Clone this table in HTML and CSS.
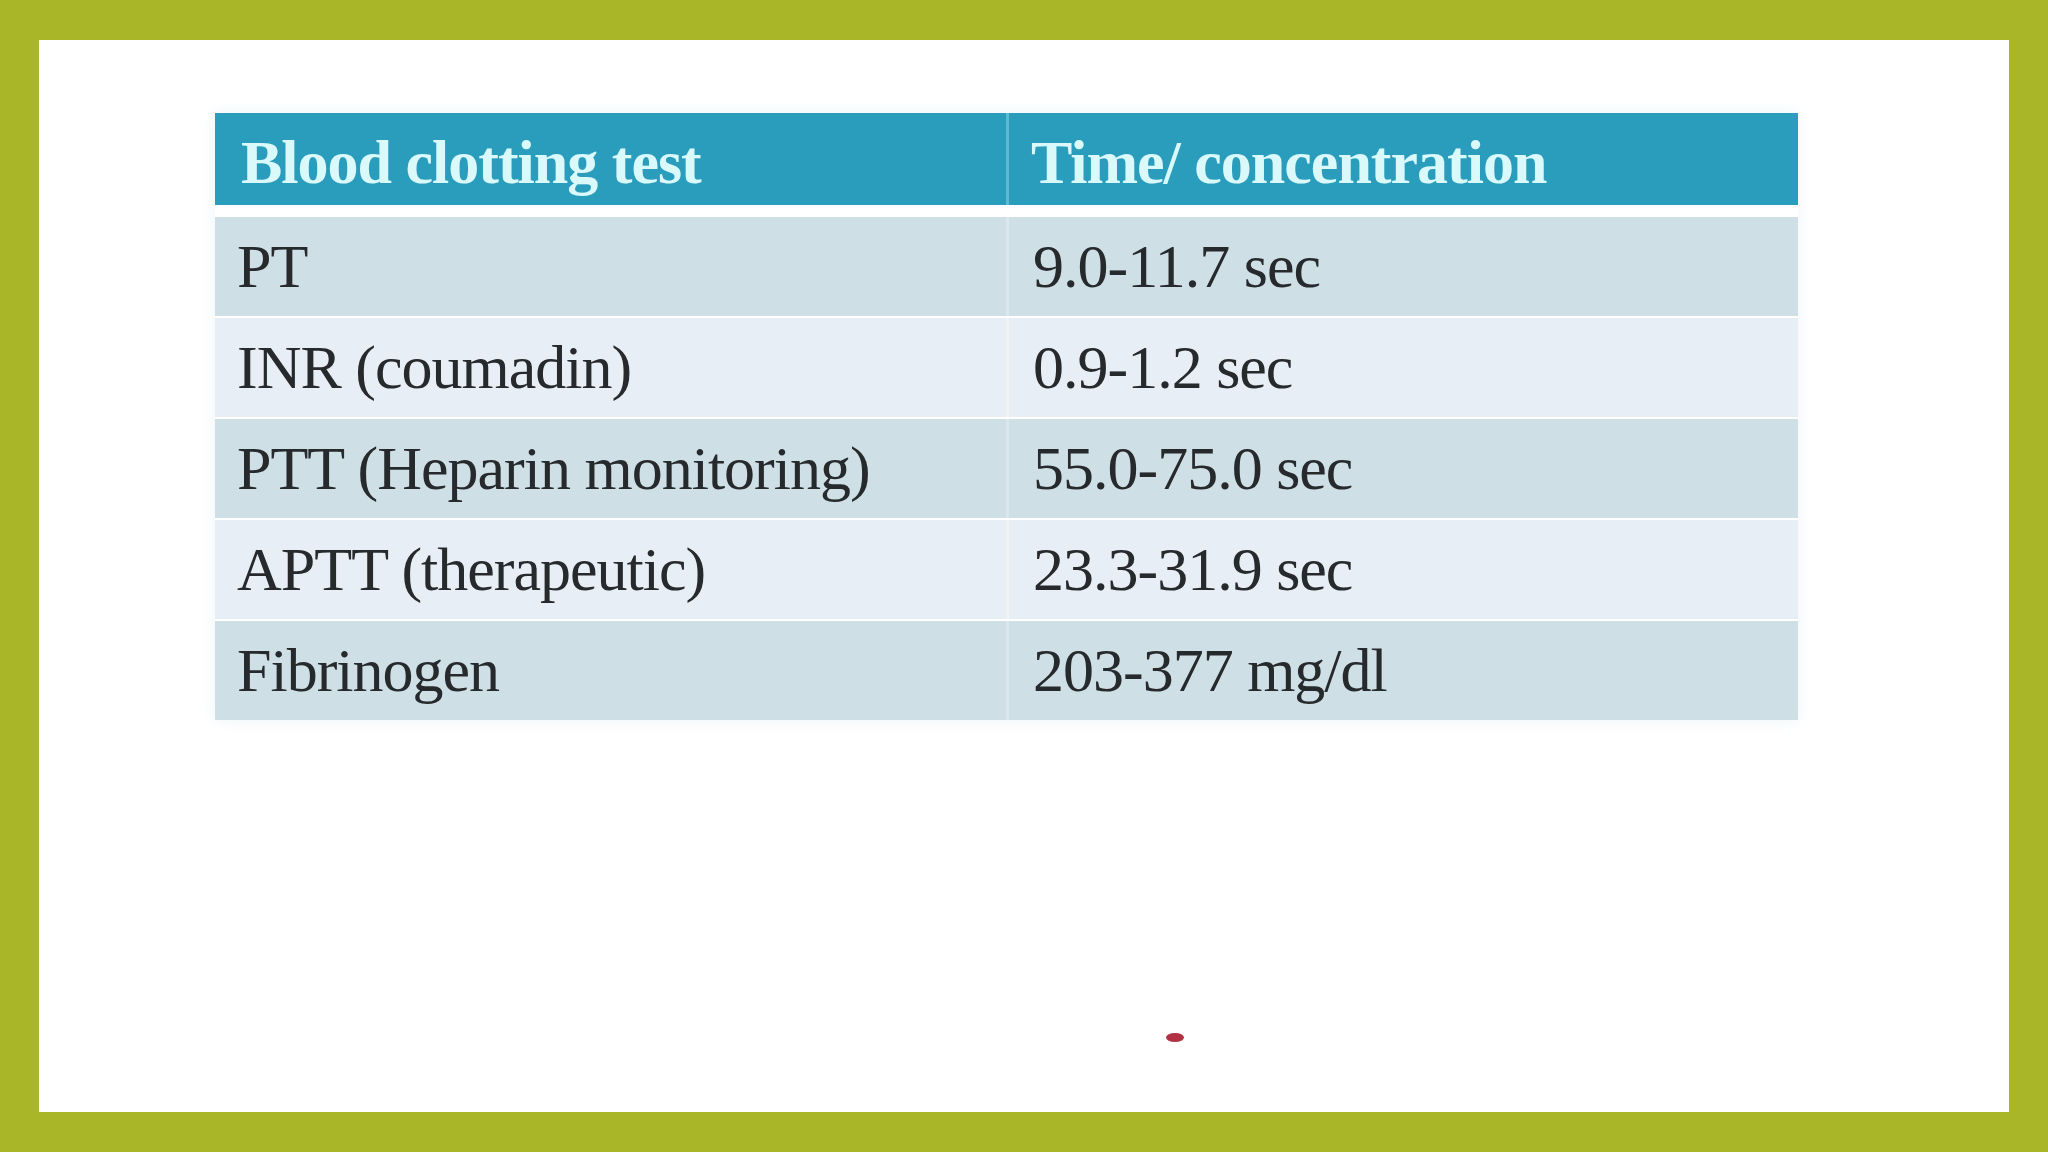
FILE: index.html
```html
<!DOCTYPE html>
<html lang="en">
<head>
<meta charset="utf-8">
<title>Blood clotting tests</title>
<link rel="stylesheet" href="styles.css">
</head>
<body>
<main class="slide">
  <div class="table">
    <div class="row head">
      <div class="cell">Blood clotting test</div>
      <div class="cell">Time/ concentration</div>
    </div>
    <div class="row odd">
      <div class="cell">PT</div>
      <div class="cell">9.0-11.7 sec</div>
    </div>
    <div class="row even">
      <div class="cell">INR (coumadin)</div>
      <div class="cell">0.9-1.2 sec</div>
    </div>
    <div class="row odd">
      <div class="cell">PTT (Heparin monitoring)</div>
      <div class="cell">55.0-75.0 sec</div>
    </div>
    <div class="row even">
      <div class="cell">APTT (therapeutic)</div>
      <div class="cell">23.3-31.9 sec</div>
    </div>
    <div class="row odd">
      <div class="cell">Fibrinogen</div>
      <div class="cell">203-377 mg/dl</div>
    </div>
  </div>
  <div class="dot-wrap"><span class="dot"></span></div>
</main>
</body>
</html>
```
FILE: styles.css
```css
html, body {
  margin: 0;
  padding: 0;
}
body {
  background: #a9b627;
  padding: 40px 39px 40px 39px;
  height: 1152px;
  box-sizing: border-box;
  font-family: "Liberation Serif", "Times New Roman", serif;
}
.slide {
  background: #ffffff;
  height: 1072px;
  padding: 73px 0 0 176px;
  box-sizing: border-box;
  display: flex;
  flex-direction: column;
}
.table {
  width: 1583px;
  display: flex;
  flex-direction: column;
  gap: 2px;
  box-shadow: 0 0 14px rgba(200, 225, 235, 0.35);
}
.row {
  display: grid;
  grid-template-columns: 791px 1fr;
  column-gap: 3px;
  height: 99px;
  font-size: 62px;
  letter-spacing: -1px;
  color: #262a2c;
}
.row .cell {
  display: flex;
  align-items: center;
  white-space: nowrap;
}
.row .cell:first-child {
  padding-left: 22px;
}
.row .cell:last-child {
  padding-left: 24px;
}
.head {
  height: 92px;
  margin-bottom: 10px;
  font-weight: bold;
  color: #d9f9fb;
}
.head .cell {
  background: #2a9dbd;
  padding-top: 7px;
  box-sizing: border-box;
}
.head .cell:first-child {
  padding-left: 26px;
}
.head .cell:last-child {
  padding-left: 22px;
}
.odd .cell {
  background: #cfdfe6;
}
.even .cell {
  background: #e8eef5;
}
.odd .cell:last-child {
  box-shadow: -3px 0 0 #dbe7ed;
}
.even .cell:last-child {
  box-shadow: -3px 0 0 #eef3f8;
}
.head .cell:last-child {
  box-shadow: -3px 0 0 #5fb9d3;
}
.dot-wrap {
  margin-top: 313px;
  padding-left: 951px;
}
.dot {
  display: block;
  width: 18px;
  height: 9px;
  border-radius: 50%;
  background: #b13343;
}
```
